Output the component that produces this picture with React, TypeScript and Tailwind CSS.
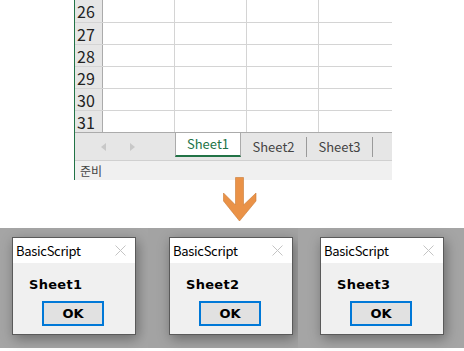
const rows = [26, 27, 28, 29, 30, 31];
const sheets = ["Sheet1", "Sheet2", "Sheet3"];

function Dialog({ name }: { name: string }) {
  return (
    <div className="w-[124px] h-[98px] border border-[#5a5a5a] bg-[#f0f0f0] shadow-[2px_4px_12px_rgba(0,0,0,0.35)] flex flex-col">
      <div className="h-[25px] bg-white flex items-center justify-between pl-[3px] pr-[9px]">
        <span className="text-[13px] text-black font-['Malgun_Gothic','Noto_Sans_CJK_KR','Noto_Sans',sans-serif] tracking-[-0.3px]">
          BasicScript
        </span>
        <svg width="11" height="11" viewBox="0 0 11 11">
          <path d="M0.5 0.5 L10.5 10.5 M10.5 0.5 L0.5 10.5" stroke="#c4c4c4" strokeWidth="1" />
        </svg>
      </div>
      <div className="flex-1 flex flex-col pl-[16px] pt-[14px]">
        <span className="text-[13px] font-bold text-black leading-[16px] font-['DejaVu_Sans',sans-serif] tracking-[0.3px]">
          {name}
        </span>
        <div className="ml-[13px] mt-[8px] w-[62px] h-[25px] border-2 border-[#0078d7] bg-[#e1e1e1] flex items-center justify-center text-[13px] font-bold text-black font-['DejaVu_Sans',sans-serif]">
          OK
        </div>
      </div>
    </div>
  );
}

export default function App() {
  return (
    <div className="w-[464px] h-[351px] bg-white overflow-hidden font-['Malgun_Gothic','Noto_Sans_CJK_KR','Noto_Sans',sans-serif]">
      <div className="ml-[74px] w-[318px] border-l border-[#217346]">
        {rows.map((r, i) => (
          <div
            key={r}
            className={`flex border-b ${i === rows.length - 1 ? "border-[#ababab] h-[22px]" : "border-[#d4d4d4] " + (i === 0 ? "h-[23px]" : "h-[22px]")}`}
          >
            <div className="w-[28px] bg-[#e6e6e6] border-r border-[#ababab] text-[16px] leading-none text-[#222] pl-[2px] flex items-center">
              {r}
            </div>
            <div className="w-[72px] border-r border-[#d4d4d4]" />
            <div className="w-[72px] border-r border-[#d4d4d4]" />
            <div className="w-[72px] border-r border-[#d4d4d4]" />
            <div className="flex-1" />
          </div>
        ))}
        <div className="h-[28px] bg-[#e6e6e6] flex items-stretch border-b border-[#d0d0d0]">
          <div className="w-[100px] flex items-center pl-[26px] gap-[24px]">
            <svg width="5" height="8" viewBox="0 0 5 8">
              <path d="M5 0 L0 4 L5 8 Z" fill="#c8c8c8" />
            </svg>
            <svg width="5" height="8" viewBox="0 0 5 8">
              <path d="M0 0 L5 4 L0 8 Z" fill="#c8c8c8" />
            </svg>
          </div>
          {sheets.map((s, i) =>
            i === 0 ? (
              <div
                key={s}
                className="w-[66px] h-[24px] bg-white border-l border-r border-[#ababab] border-b-2 border-b-[#217346] flex items-center justify-center text-[13px] text-[#217346]"
              >
                {s}
              </div>
            ) : (
              <div key={s} className="w-[66px] flex items-center">
                <div className="flex-1 text-center text-[13px] text-[#444]">{s}</div>
                <div className="w-px h-[20px] bg-[#9a9a9a]" />
              </div>
            )
          )}
        </div>
        <div className="h-[19px] bg-[#f0f0f0] flex items-center pl-[5px] text-[12px] text-[#444]">준비</div>
      </div>
      <div className="h-[51px] pl-[223px]">
        <svg width="34" height="45" viewBox="0 0 34 45" className="-mt-[3px]">
          <path
            d="M12.5 0.5 H20.5 V28 L33 16 V24 L16.5 44 L0.5 24 V16 L12.5 28 Z"
            fill="#ea9247"
            stroke="#c97a35"
            strokeWidth="0.6"
          />
        </svg>
      </div>
      <div className="h-[120px] flex">
        <div className="w-[148px] bg-[#a5a5a5] pl-[12px] pt-[9px]">
          <Dialog name="Sheet1" />
        </div>
        <div className="w-[150px] bg-[#a3a3a3] pl-[21px] pt-[9px]">
          <Dialog name="Sheet2" />
        </div>
        <div className="flex-1 bg-[#a5a5a5] pl-[22px] pt-[9px]">
          <Dialog name="Sheet3" />
        </div>
      </div>
    </div>
  );
}
